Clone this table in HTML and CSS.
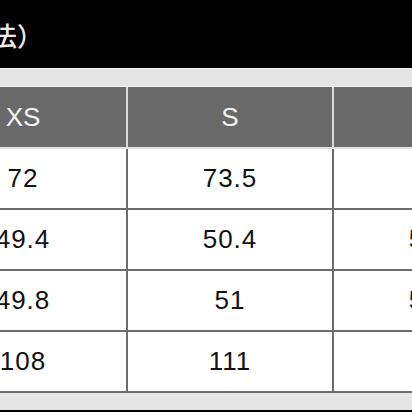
FILE: index.html
```html
<!DOCTYPE html>
<html lang="ja">
<head>
<meta charset="utf-8">
<link rel="stylesheet" href="styles.css">
</head>
<body>
<div class="top"><span class="title">法）</span></div>
<div class="panel">
  <div class="table">
    <div class="cell head c1">XS</div>
    <div class="cell head">S</div>
    <div class="cell head">M</div>
    <div class="cell c1">72</div>
    <div class="cell">73.5</div>
    <div class="cell">75</div>
    <div class="cell c1">49.4</div>
    <div class="cell">50.4</div>
    <div class="cell">51.4</div>
    <div class="cell c1">49.8</div>
    <div class="cell">51</div>
    <div class="cell">52.2</div>
    <div class="cell c1">108</div>
    <div class="cell">111</div>
    <div class="cell">114</div>
  </div>
</div>
</body>
</html>
```

FILE: styles.css
```css
html, body {
  margin: 0;
  padding: 0;
}
body {
  background: #000;
  width: 412px;
  height: 412px;
  overflow: hidden;
}
.top {
  height: 68px;
  display: flex;
  align-items: center;
  overflow: hidden;
}
.title {
  margin-left: -9px;
  color: #ececec;
  font-family: "Noto Sans CJK JP", sans-serif;
  font-size: 26px;
  font-weight: 500;
  white-space: nowrap;
  line-height: 1;
  padding-top: 2px;
}
.panel {
  background: #e5e5e5;
  border-top: 1px solid #f3f3f3;
  padding: 17px 0;
  overflow: hidden;
}
.table {
  margin-left: -80px;
  display: grid;
  grid-template-columns: 208px 206px 206px;
  width: 620px;
  border-top: 1px solid #f4f4f4;
  font-family: "Liberation Sans", Arial, sans-serif;
  font-size: 26px;
  letter-spacing: 1px;
}
.cell {
  height: 59px;
  background: #fff;
  color: #111;
  display: flex;
  align-items: center;
  justify-content: center;
  border-right: 2px solid #6c6c6c;
  border-bottom: 2px solid #6c6c6c;
}
.head {
  height: 60px;
  background: #696969;
  color: #f4f4f4;
  letter-spacing: 0;
  border-right-color: #d9d9d9;
  border-bottom-color: #e2e2e2;
}
```
